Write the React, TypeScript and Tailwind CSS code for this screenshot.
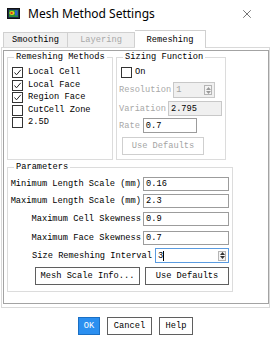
import { X } from 'lucide-react'

const mono = "font-['Liberation_Mono','DejaVu_Sans_Mono',monospace] text-[8.7px] leading-[10px]"

function Check({ checked }: { checked?: boolean }) {
  return (
    <div className="w-[11px] h-[11px] border border-[#333] bg-white shrink-0">
      {checked && (
        <svg width="9" height="9" viewBox="0 0 9 9">
          <path d="M1.5 4.5 L3.5 6.8 L7.8 1.8" fill="none" stroke="#222" strokeWidth="1" />
        </svg>
      )}
    </div>
  )
}

function Spin({ muted }: { muted?: boolean }) {
  const c = muted ? '#9a9a9a' : '#333'
  return (
    <div className="ml-auto mr-[2px] w-[8px] h-[10px] border border-[#b5b5b5] bg-[#f4f4f4] flex flex-col items-center justify-center gap-[1px]">
      <svg width="5" height="3" viewBox="0 0 5 3"><path d="M0 3 L2.5 0 L5 3 Z" fill={c} /></svg>
      <svg width="5" height="3" viewBox="0 0 5 3"><path d="M0 0 L2.5 3 L5 0 Z" fill={c} /></svg>
    </div>
  )
}

function Field({ value, w, h = 'h-[14px]', disabled, focus, spin, caret }: {
  value: string; w: string; h?: string; disabled?: boolean; focus?: boolean; spin?: boolean; caret?: boolean
}) {
  return (
    <div
      className={`${w} ${h} shrink-0 flex items-center pl-[2px] border ${
        focus ? 'border-[#5a9be0]' : disabled ? 'border-[#c8c8c8]' : 'border-[#9c9c9c]'
      } ${disabled ? 'bg-[#f0f0f0]' : 'bg-white'}`}
    >
      <span className={disabled && spin ? 'text-[#a0a0a0]' : 'text-black'}>{value}</span>
      {caret && <span className="w-px h-[10px] bg-black" />}
      {spin && <Spin muted={disabled} />}
    </div>
  )
}

function Button({ label, w, disabled, primary }: { label: string; w: string; disabled?: boolean; primary?: boolean }) {
  return (
    <button
      className={`${w} h-[18px] flex items-center justify-center border ${
        primary
          ? 'border-[#1a6fc4] bg-[#2b8ff0] text-white'
          : disabled
            ? 'border-[#cfcfcf] bg-white text-[#a4a4a4]'
            : 'border-[#5f5f5f] bg-white text-black'
      }`}
    >
      {label}
    </button>
  )
}

function Group({ title, className, children }: { title: string; className: string; children: React.ReactNode }) {
  return (
    <div className={`relative border border-[#dcdcdc] shrink-0 ${className}`}>
      <span className="absolute -top-[6px] left-[6px] px-[2px] bg-white text-black">{title}</span>
      {children}
    </div>
  )
}

export default function App() {
  const methods: [string, boolean][] = [
    ['Local Cell', true],
    ['Local Face', true],
    ['Region Face', true],
    ['CutCell Zone', false],
    ['2.5D', false],
  ]
  const params: { label: string; value: string; w: string; mt: string }[] = [
    { label: 'Minimum Length Scale (mm)', value: '0.16', w: 'w-[86px]', mt: 'mt-[9px]' },
    { label: 'Maximum Length Scale (mm)', value: '2.3', w: 'w-[86px]', mt: 'mt-[3px]' },
    { label: 'Maximum Cell Skewness', value: '0.9', w: 'w-[86px]', mt: 'mt-[4px]' },
    { label: 'Maximum Face Skewness', value: '0.7', w: 'w-[86px]', mt: 'mt-[5px]' },
  ]

  return (
    <div className={`w-[271px] h-[346px] bg-white overflow-hidden ${mono}`}>
      {/* title bar */}
      <div className="h-[27px] flex items-center">
        <svg className="ml-[7px]" width="13" height="11" viewBox="0 0 13 11">
          <rect x="0.5" y="0.5" width="12" height="10" fill="#1b2a4a" stroke="#111" />
          <rect x="2" y="2" width="9" height="7" fill="#2a8f3a" />
          <ellipse cx="5" cy="5" rx="2.6" ry="2" fill="#e8d21a" />
          <ellipse cx="4.6" cy="5" rx="1.2" ry="1" fill="#d7261d" />
          <rect x="8" y="2.5" width="2.5" height="5" fill="#2c62c9" />
        </svg>
        <span className="ml-[8px] font-['Noto_Sans',sans-serif] text-[12px] leading-[16px] text-black">
          Mesh Method Settings
        </span>
        <X className="ml-auto mr-[17px]" size={14} strokeWidth={1} color="#111" />
      </div>

      {/* tabs */}
      <div className="mt-[3px] ml-[3px] h-[17px] flex items-end">
        <div className="w-[65px] h-[15px] border border-b-0 border-[#d0d0d0] bg-[#f0f0f0] flex items-center justify-center text-black">
          Smoothing
        </div>
        <div className="w-[67px] h-[15px] border border-b-0 border-l-0 border-[#d0d0d0] bg-[#f0f0f0] flex items-center justify-center text-[#a8a8a8]">
          Layering
        </div>
        <div className="relative z-10 w-[71px] h-[18px] -mb-px border border-b-0 border-l-0 border-[#d0d0d0] bg-white flex items-center justify-center text-black">
          Remeshing
        </div>
      </div>

      {/* tab page */}
      <div className="ml-[1px] w-[269px] h-[261px] border border-[#d9d9d9] pt-[2px] pl-[1px]">
        <div className="w-[266px] h-[254px] border border-[#a3a3a3] pl-[2px]">
          <div className="flex mt-[6px] gap-[3px]">
            <Group title="Remeshing Methods" className="w-[106px] h-[103px] ml-px">
              <div className="pt-[9px] pl-[4px] flex flex-col">
                {methods.map(([label, on]) => (
                  <div key={label} className="h-[12.5px] flex items-start gap-[5px]">
                    <Check checked={on} />
                    <span className="leading-[11px]">{label}</span>
                  </div>
                ))}
              </div>
            </Group>

            <Group title="Sizing Function" className="w-[110px] h-[103px]">
              <div className="pt-[9px] pl-[2px] flex flex-col">
                <div className="ml-[2px] flex items-center gap-[3px]">
                  <Check />
                  <span className="leading-[11px]">On</span>
                </div>
                <div className="mt-[4px] flex items-center gap-[2px] text-[#a8a8a8]">
                  <span>Resolution</span>
                  <Field value="1" w="w-[42px]" h="h-[16px]" disabled spin />
                </div>
                <div className="mt-[3px] flex items-center gap-[2px] text-[#a8a8a8]">
                  <span>Variation</span>
                  <Field value="2.795" w="w-[54px]" h="h-[15px]" disabled />
                </div>
                <div className="mt-[2px] flex items-center gap-[3px] text-[#a8a8a8]">
                  <span>Rate</span>
                  <Field value="0.7" w="w-[54px]" h="h-[15px]" />
                </div>
                <div className="mt-[4px] ml-[3px]">
                  <Button label="Use Defaults" w="w-[82px]" disabled />
                </div>
              </div>
            </Group>
          </div>

          <Group title="Parameters" className="mt-[7px] ml-px w-[226px] h-[125px]">
            <div className="flex flex-col pr-[3px]">
              {params.map((p) => (
                <div key={p.label} className={`${p.mt} flex items-center justify-end gap-[2px]`}>
                  <span className="whitespace-pre">{p.label}</span>
                  <Field value={p.value} w={p.w} />
                </div>
              ))}
              <div className="mt-[3px] flex items-center justify-end gap-[3px]">
                <span className="whitespace-pre">Size Remeshing Interval</span>
                <Field value="3" w="w-[74px]" h="h-[15px]" focus spin caret />
              </div>
              <div className="mt-[4px] ml-[27px] flex gap-[5px]">
                <Button label="Mesh Scale Info..." w="w-[105px]" />
                <Button label="Use Defaults" w="w-[84px]" />
              </div>
            </div>
          </Group>
        </div>
      </div>

      {/* dialog buttons */}
      <div className="mt-[9px] flex justify-center gap-[7px]">
        <Button label="OK" w="w-[22px]" primary />
        <Button label="Cancel" w="w-[45px]" />
        <Button label="Help" w="w-[34px]" />
      </div>
    </div>
  )
}
